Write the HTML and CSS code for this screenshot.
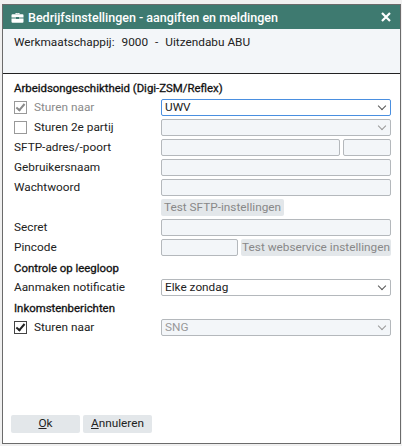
FILE: index.html
```html
<!DOCTYPE html>
<html lang="nl">
<head>
    <meta charset="UTF-8">
    <title>Bedrijfsinstellingen</title>
    <link rel="stylesheet" href="styles.css">
</head>
<body>
    <div class="dialog">
        <div class="titlebar">
            <svg class="title-icon" width="13" height="11" viewBox="0 0 13 11">
                <path d="M4.5 2V1h4v1h-1V1.8h-2V2z M0.5 3.2q0-1 1-1h10q1 0 1 1V5.5H8V5H5v.5H0.5z M0.5 6.5H5V7h3v-.5h4.5v3.3q0 1-1 1h-10q-1 0-1-1z" fill="#fff"/>
            </svg>
            <span class="title-text">Bedrijfsinstellingen - aangiften en meldingen</span>
            <svg class="close" width="10" height="10" viewBox="0 0 10 10">
                <path d="M1 1L9 9M9 1L1 9" stroke="#fff" stroke-width="2.2"/>
            </svg>
        </div>

        <div class="header">
            <span>Werkmaatschappij:</span>
            <span>9000</span>
            <span>-</span>
            <span>Uitzendabu ABU</span>
        </div>

        <div class="content">
            <div class="section-title">Arbeidsongeschiktheid (Digi-ZSM/Reflex)</div>

            <div class="row">
                <label class="check disabled"><span class="box checked"></span>Sturen naar</label>
                <div class="select focus">UWV</div>
            </div>
            <div class="row">
                <label class="check"><span class="box"></span>Sturen 2e partij</label>
                <div class="select off"></div>
            </div>
            <div class="row">
                <label>SFTP-adres/-poort</label>
                <div class="pair">
                    <div class="input wide"></div>
                    <div class="input port"></div>
                </div>
            </div>
            <div class="row">
                <label>Gebruikersnaam</label>
                <div class="input"></div>
            </div>
            <div class="row">
                <label>Wachtwoord</label>
                <div class="input"></div>
            </div>
            <div class="row">
                <label></label>
                <div class="field"><span class="btn test">Test SFTP-instellingen</span></div>
            </div>
            <div class="row">
                <label>Secret</label>
                <div class="input"></div>
            </div>
            <div class="row">
                <label>Pincode</label>
                <div class="pair">
                    <div class="input pin"></div>
                    <span class="btn test grow">Test webservice instellingen</span>
                </div>
            </div>

            <div class="section-title">Controle op leegloop</div>
            <div class="row">
                <label>Aanmaken notificatie</label>
                <div class="select">Elke zondag</div>
            </div>

            <div class="section-title">Inkomstenberichten</div>
            <div class="row">
                <label class="check"><span class="box checked dark"></span>Sturen naar</label>
                <div class="select off text-off">SNG</div>
            </div>
        </div>

        <div class="footer">
            <span class="btn action"><u>O</u>k</span>
            <span class="btn action"><u>A</u>nnuleren</span>
        </div>
    </div>
</body>
</html>
```

FILE: styles.css
```css
body {
    margin: 0;
    background-color: #f0f0f0;
    font-family: Roboto, "Liberation Sans", sans-serif;
    font-size: 11.8px;
    color: #222;
}
.dialog {
    margin: 4px 1px 2px 2px;
    height: 440px;
    border: 1px solid #6b6b6b;
    background-color: #fff;
    display: flex;
    flex-direction: column;
    box-sizing: border-box;
}
.titlebar {
    height: 24px;
    background-color: #3e7a70;
    color: #fff;
    display: flex;
    align-items: center;
    padding: 0 9px 0 8px;
}
.title-icon {
    margin-right: 4px;
}
.title-text {
    flex-grow: 1;
    font-weight: 500;
    font-size: 12.5px;
}
.header {
    height: 45px;
    background-color: #f3f6f9;
    border-bottom: 1px solid #222;
    padding: 6px 0 0 11px;
    box-sizing: border-box;
    display: flex;
    align-items: flex-start;
    gap: 7px;
}
.content {
    flex-grow: 1;
    padding: 3px 9px 0 11px;
}
.section-title {
    color: #111;
    height: 17px;
    padding-top: 3px;
    line-height: 17px;
    font-size: 11.4px;
    -webkit-text-stroke: 0.3px #111;
}
.row {
    display: flex;
    align-items: center;
    height: 20px;
}
.row > label {
    width: 147px;
    flex-shrink: 0;
}
.check {
    display: flex;
    align-items: center;
}
.check.disabled {
    color: #8a8a8a;
}
.box {
    width: 11px;
    height: 11px;
    border: 1px solid #999;
    background-color: #fff;
    margin-right: 7px;
    position: relative;
}
.box.checked::after {
    content: "";
    position: absolute;
    left: 3px;
    top: 0px;
    width: 3px;
    height: 7px;
    border: solid #8a8a8a;
    border-width: 0 2px 2px 0;
    transform: rotate(40deg);
}
.box.dark {
    border-color: #444;
}
.box.dark::after {
    border-color: #222;
}
.field, .pair {
    flex-grow: 1;
    display: flex;
    gap: 3px;
}
.input, .select {
    flex-grow: 1;
    height: 17px;
    box-sizing: border-box;
    border: 1px solid #b4b8bc;
    border-radius: 2px;
    background-color: #f3f6f9;
}
.select {
    background-color: #fff;
    padding-left: 3px;
    line-height: 15px;
    position: relative;
}
.select::after {
    content: "";
    position: absolute;
    right: 5px;
    top: 3px;
    width: 5px;
    height: 5px;
    border: solid #555;
    border-width: 0 1px 1px 0;
    transform: rotate(45deg);
}
.select.focus {
    border-color: #4a8fe0;
}
.select.off {
    background-color: #f3f6f9;
}
.select.off::after {
    border-color: #999;
}
.text-off {
    color: #999;
}
.input.wide {
    flex-grow: 0;
    width: 179px;
}
.input.port {
    flex-grow: 1;
}
.input.pin {
    flex-grow: 0;
    width: 77px;
}
.btn {
    display: inline-block;
    height: 17px;
    line-height: 17px;
    background-color: #e3e7ea;
    border-radius: 2px;
    padding: 0 3px;
    box-sizing: border-box;
    white-space: nowrap;
}
.btn.test {
    color: #888;
}
.btn.grow {
    flex-grow: 1;
    padding: 0;
    text-align: center;
    overflow: hidden;
}
.footer {
    display: flex;
    gap: 3px;
    padding: 0 0 10px 8px;
}
.btn.action {
    width: 69px;
    height: 18px;
    text-align: center;
    color: #222;
}
```
